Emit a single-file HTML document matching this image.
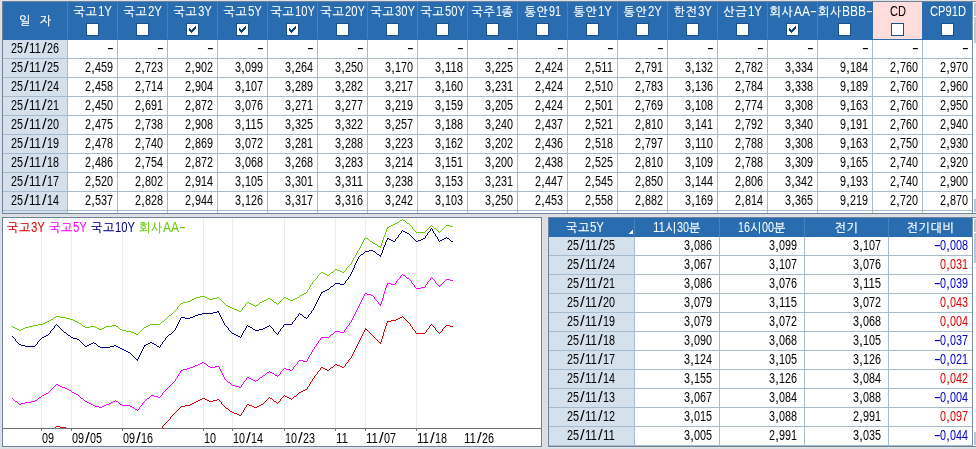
<!DOCTYPE html>
<html lang="ko"><head><meta charset="utf-8"><title>채권 금리</title>
<style>
html,body{margin:0;padding:0}
body{width:976px;height:449px;overflow:hidden;background:#dcdde1;position:relative;font-family:"Liberation Sans","NanumGothic","Noto Sans CJK KR",sans-serif;font-size:14px;line-height:14px;color:#000}
div,span,b,u{position:absolute;white-space:nowrap;height:14px}
.r{background:currentColor}
span{transform-origin:0 50%}
b{font-weight:normal;font-size:12px;-webkit-text-stroke:.2px}
.w{color:#fff}
.cb{width:11px;height:11px;background:#fff;border:1px solid #1b4f87}
.cb svg{position:absolute;left:2px;top:2px}
.s0{transform:scaleX(0.818)}
.s1{transform:scaleX(0.803)}
.s2{transform:scaleX(0.77)}
.s3{transform:scaleX(0.856)}
.s4{transform:scaleX(1.46)}
.s5{transform:scaleX(0.857)}
.s6{transform:scaleX(0.791)}
.s7{transform:scaleX(0.798)}
.s8{transform:scaleX(1.2)}
.s9{transform:scaleX(0.825)}
.s10{transform:scaleX(1.028)}
.s11{transform:scaleX(0.771)}
.s12{transform:scaleX(0.806)}
</style></head><body><div id="wrap" style="left:0;top:0;width:976px;height:449px;will-change:transform">
<div class="r" style="left:1px;top:0px;width:975px;height:215px;color:#e2e2e4"></div><div class="r" style="left:1px;top:216px;width:542px;height:232px;color:#e2e2e4"></div><div class="r" style="left:547px;top:216px;width:429px;height:232px;color:#e2e2e4"></div><div class="r" style="left:2px;top:1px;width:974px;height:213px;color:#6c819b"></div><div class="r" style="left:3px;top:2px;width:969px;height:211px;color:#fff"></div><div class="r" style="left:972px;top:2px;width:1px;height:211px;color:#7d90aa"></div><div class="r" style="left:973px;top:2px;width:3px;height:211px;color:#fff"></div><div class="r" style="left:974px;top:3px;width:2px;height:13px;color:#bcc8d9"></div><div class="r" style="left:974px;top:17px;width:2px;height:26px;color:#bcc8d9"></div><div class="r" style="left:974px;top:199px;width:2px;height:13px;color:#bcc8d9"></div><div class="r" style="left:3px;top:2px;width:969px;height:38px;color:#296cb0"></div><div class="r" style="left:873px;top:2px;width:49px;height:37px;color:#ffdddc"></div><div class="r" style="left:67px;top:2px;width:1px;height:37px;color:#4681bd"></div><div class="r" style="left:117px;top:2px;width:1px;height:37px;color:#4681bd"></div><div class="r" style="left:167px;top:2px;width:1px;height:37px;color:#4681bd"></div><div class="r" style="left:217px;top:2px;width:1px;height:37px;color:#4681bd"></div><div class="r" style="left:267px;top:2px;width:1px;height:37px;color:#4681bd"></div><div class="r" style="left:317px;top:2px;width:1px;height:37px;color:#4681bd"></div><div class="r" style="left:367px;top:2px;width:1px;height:37px;color:#4681bd"></div><div class="r" style="left:417px;top:2px;width:1px;height:37px;color:#4681bd"></div><div class="r" style="left:467px;top:2px;width:1px;height:37px;color:#4681bd"></div><div class="r" style="left:517px;top:2px;width:1px;height:37px;color:#4681bd"></div><div class="r" style="left:567px;top:2px;width:1px;height:37px;color:#4681bd"></div><div class="r" style="left:617px;top:2px;width:1px;height:37px;color:#4681bd"></div><div class="r" style="left:667px;top:2px;width:1px;height:37px;color:#4681bd"></div><div class="r" style="left:717px;top:2px;width:1px;height:37px;color:#4681bd"></div><div class="r" style="left:767px;top:2px;width:1px;height:37px;color:#4681bd"></div><div class="r" style="left:817px;top:2px;width:1px;height:37px;color:#4681bd"></div><div class="r" style="left:3px;top:40px;width:64px;height:173px;color:#d5e0ed"></div><div class="r" style="left:67px;top:40px;width:1px;height:173px;color:#a7bbcf"></div><div class="r" style="left:117px;top:40px;width:1px;height:173px;color:#a7bbcf"></div><div class="r" style="left:167px;top:40px;width:1px;height:173px;color:#a7bbcf"></div><div class="r" style="left:217px;top:40px;width:1px;height:173px;color:#a7bbcf"></div><div class="r" style="left:267px;top:40px;width:1px;height:173px;color:#a7bbcf"></div><div class="r" style="left:317px;top:40px;width:1px;height:173px;color:#a7bbcf"></div><div class="r" style="left:367px;top:40px;width:1px;height:173px;color:#a7bbcf"></div><div class="r" style="left:417px;top:40px;width:1px;height:173px;color:#a7bbcf"></div><div class="r" style="left:467px;top:40px;width:1px;height:173px;color:#a7bbcf"></div><div class="r" style="left:517px;top:40px;width:1px;height:173px;color:#a7bbcf"></div><div class="r" style="left:567px;top:40px;width:1px;height:173px;color:#a7bbcf"></div><div class="r" style="left:617px;top:40px;width:1px;height:173px;color:#a7bbcf"></div><div class="r" style="left:667px;top:40px;width:1px;height:173px;color:#a7bbcf"></div><div class="r" style="left:717px;top:40px;width:1px;height:173px;color:#a7bbcf"></div><div class="r" style="left:767px;top:40px;width:1px;height:173px;color:#a7bbcf"></div><div class="r" style="left:817px;top:40px;width:1px;height:173px;color:#a7bbcf"></div><div class="r" style="left:872px;top:40px;width:1px;height:173px;color:#a7bbcf"></div><div class="r" style="left:922px;top:40px;width:1px;height:173px;color:#a7bbcf"></div><div class="r" style="left:3px;top:58px;width:969px;height:1px;color:#a7bbcf"></div><div class="r" style="left:3px;top:77px;width:969px;height:1px;color:#a7bbcf"></div><div class="r" style="left:3px;top:96px;width:969px;height:1px;color:#a7bbcf"></div><div class="r" style="left:3px;top:115px;width:969px;height:1px;color:#a7bbcf"></div><div class="r" style="left:3px;top:134px;width:969px;height:1px;color:#a7bbcf"></div><div class="r" style="left:3px;top:153px;width:969px;height:1px;color:#a7bbcf"></div><div class="r" style="left:3px;top:172px;width:969px;height:1px;color:#a7bbcf"></div><div class="r" style="left:3px;top:191px;width:969px;height:1px;color:#a7bbcf"></div><div class="r" style="left:3px;top:210px;width:969px;height:1px;color:#a7bbcf"></div>
<b class="w" style="left:19px;top:14px;letter-spacing:0.72px">일</b>
<b class="w" style="left:40px;top:14px;letter-spacing:0.72px">자</b>
<b class="w" style="left:73.5px;top:5px;letter-spacing:0.72px">국고</b><span class="w s0" style="left:97.5px;top:4px">1Y</span>
<div class="cb" style="left:86px;top:23px"></div><b class="w" style="left:123.5px;top:5px;letter-spacing:0.72px">국고</b><span class="w s0" style="left:147.5px;top:4px">2Y</span>
<div class="cb" style="left:136px;top:23px"></div><b class="w" style="left:173.5px;top:5px;letter-spacing:0.72px">국고</b><span class="w s0" style="left:197.5px;top:4px">3Y</span>
<div class="cb" style="left:186px;top:23px"><svg width="7" height="7" viewBox="0 0 7 7"><path d="M0 2h1v1h1v1h1v-1h1v-1h1v-1h1v-1h1v3h-1v1h-1v1h-1v1h-1v1h-1v-1h-1v-1h-1z" fill="#0e3f7a"/></svg></div><b class="w" style="left:223.5px;top:5px;letter-spacing:0.72px">국고</b><span class="w s0" style="left:247.5px;top:4px">5Y</span>
<div class="cb" style="left:236px;top:23px"><svg width="7" height="7" viewBox="0 0 7 7"><path d="M0 2h1v1h1v1h1v-1h1v-1h1v-1h1v-1h1v3h-1v1h-1v1h-1v1h-1v1h-1v-1h-1v-1h-1z" fill="#0e3f7a"/></svg></div><b class="w" style="left:270.5px;top:5px;letter-spacing:0.72px">국고</b><span class="w s1" style="left:294.5px;top:4px">10Y</span>
<div class="cb" style="left:286px;top:23px"><svg width="7" height="7" viewBox="0 0 7 7"><path d="M0 2h1v1h1v1h1v-1h1v-1h1v-1h1v-1h1v3h-1v1h-1v1h-1v1h-1v1h-1v-1h-1v-1h-1z" fill="#0e3f7a"/></svg></div><b class="w" style="left:320.5px;top:5px;letter-spacing:0.72px">국고</b><span class="w s1" style="left:344.5px;top:4px">20Y</span>
<div class="cb" style="left:336px;top:23px"></div><b class="w" style="left:370.5px;top:5px;letter-spacing:0.72px">국고</b><span class="w s1" style="left:394.5px;top:4px">30Y</span>
<div class="cb" style="left:386px;top:23px"></div><b class="w" style="left:420.5px;top:5px;letter-spacing:0.72px">국고</b><span class="w s1" style="left:444.5px;top:4px">50Y</span>
<div class="cb" style="left:436px;top:23px"></div><b class="w" style="left:471.5px;top:5px;letter-spacing:0.72px">국주</b><span class="w s2" style="left:495.5px;top:4px">1</span><b class="w" style="left:501.5px;top:5px;letter-spacing:0.72px">종</b>
<div class="cb" style="left:486px;top:23px"></div><b class="w" style="left:524.5px;top:5px;letter-spacing:0.72px">통안</b><span class="w s2" style="left:548.5px;top:4px">91</span>
<div class="cb" style="left:536px;top:23px"></div><b class="w" style="left:573.5px;top:5px;letter-spacing:0.72px">통안</b><span class="w s0" style="left:597.5px;top:4px">1Y</span>
<div class="cb" style="left:586px;top:23px"></div><b class="w" style="left:623.5px;top:5px;letter-spacing:0.72px">통안</b><span class="w s0" style="left:647.5px;top:4px">2Y</span>
<div class="cb" style="left:636px;top:23px"></div><b class="w" style="left:673.5px;top:5px;letter-spacing:0.72px">한전</b><span class="w s0" style="left:697.5px;top:4px">3Y</span>
<div class="cb" style="left:686px;top:23px"></div><b class="w" style="left:723.5px;top:5px;letter-spacing:0.72px">산금</b><span class="w s0" style="left:747.5px;top:4px">1Y</span>
<div class="cb" style="left:736px;top:23px"></div><b class="w" style="left:769.5px;top:5px;letter-spacing:0.72px">회사</b><span class="w s3" style="left:793.5px;top:4px">AA</span><span class="w s4" style="left:809.6px;top:4px">-</span>
<div class="cb" style="left:786px;top:23px"><svg width="7" height="7" viewBox="0 0 7 7"><path d="M0 2h1v1h1v1h1v-1h1v-1h1v-1h1v-1h1v3h-1v1h-1v1h-1v1h-1v1h-1v-1h-1v-1h-1z" fill="#0e3f7a"/></svg></div><b class="w" style="left:818px;top:5px;letter-spacing:0.72px">회사</b><span class="w s5" style="left:842px;top:4px">BBB</span><span class="w s4" style="left:866.1px;top:4px">-</span>
<div class="cb" style="left:838px;top:23px"></div><span class="s6" style="left:889.5px;top:4px">CD</span>
<div class="cb" style="left:891px;top:23px"></div><span class="w s7" style="left:929.5px;top:4px">CP91D</span>
<div class="cb" style="left:941px;top:23px"></div>
<span class="s2" style="left:11px;top:41px">25</span><span class="s8" style="left:23.67px;top:41px">/</span><span class="s9" style="left:29px;top:41px">11</span><span class="s8" style="left:41.67px;top:41px">/</span><span class="s2" style="left:47px;top:41px">26</span>
<span class="s4" style="left:107.1px;top:41px">-</span>
<span class="s4" style="left:157.1px;top:41px">-</span>
<span class="s4" style="left:207.1px;top:41px">-</span>
<span class="s4" style="left:257.1px;top:41px">-</span>
<span class="s4" style="left:307.1px;top:41px">-</span>
<span class="s4" style="left:357.1px;top:41px">-</span>
<span class="s4" style="left:407.1px;top:41px">-</span>
<span class="s4" style="left:457.1px;top:41px">-</span>
<span class="s4" style="left:507.1px;top:41px">-</span>
<span class="s4" style="left:557.1px;top:41px">-</span>
<span class="s4" style="left:607.1px;top:41px">-</span>
<span class="s4" style="left:657.1px;top:41px">-</span>
<span class="s4" style="left:707.1px;top:41px">-</span>
<span class="s4" style="left:757.1px;top:41px">-</span>
<span class="s4" style="left:807.1px;top:41px">-</span>
<span class="s4" style="left:862.1px;top:41px">-</span>
<span class="s4" style="left:912.1px;top:41px">-</span>
<span class="s4" style="left:962.1px;top:41px">-</span>

<span class="s2" style="left:11px;top:60px">25</span><span class="s8" style="left:23.67px;top:60px">/</span><span class="s9" style="left:29px;top:60px">11</span><span class="s8" style="left:41.67px;top:60px">/</span><span class="s2" style="left:47px;top:60px">25</span>
<span class="s2" style="left:85px;top:60px">2</span><span class="s10" style="left:91px;top:60px">,</span><span class="s11" style="left:95px;top:60px">459</span>
<span class="s2" style="left:135px;top:60px">2</span><span class="s10" style="left:141px;top:60px">,</span><span class="s11" style="left:145px;top:60px">723</span>
<span class="s2" style="left:185px;top:60px">2</span><span class="s10" style="left:191px;top:60px">,</span><span class="s11" style="left:195px;top:60px">902</span>
<span class="s2" style="left:235px;top:60px">3</span><span class="s10" style="left:241px;top:60px">,</span><span class="s11" style="left:245px;top:60px">099</span>
<span class="s2" style="left:285px;top:60px">3</span><span class="s10" style="left:291px;top:60px">,</span><span class="s11" style="left:295px;top:60px">264</span>
<span class="s2" style="left:335px;top:60px">3</span><span class="s10" style="left:341px;top:60px">,</span><span class="s11" style="left:345px;top:60px">250</span>
<span class="s2" style="left:385px;top:60px">3</span><span class="s10" style="left:391px;top:60px">,</span><span class="s11" style="left:395px;top:60px">170</span>
<span class="s2" style="left:435px;top:60px">3</span><span class="s10" style="left:441px;top:60px">,</span><span class="s12" style="left:445px;top:60px">118</span>
<span class="s2" style="left:485px;top:60px">3</span><span class="s10" style="left:491px;top:60px">,</span><span class="s11" style="left:495px;top:60px">225</span>
<span class="s2" style="left:535px;top:60px">2</span><span class="s10" style="left:541px;top:60px">,</span><span class="s11" style="left:545px;top:60px">424</span>
<span class="s2" style="left:585px;top:60px">2</span><span class="s10" style="left:591px;top:60px">,</span><span class="s12" style="left:595px;top:60px">511</span>
<span class="s2" style="left:635px;top:60px">2</span><span class="s10" style="left:641px;top:60px">,</span><span class="s11" style="left:645px;top:60px">791</span>
<span class="s2" style="left:685px;top:60px">3</span><span class="s10" style="left:691px;top:60px">,</span><span class="s11" style="left:695px;top:60px">132</span>
<span class="s2" style="left:735px;top:60px">2</span><span class="s10" style="left:741px;top:60px">,</span><span class="s11" style="left:745px;top:60px">782</span>
<span class="s2" style="left:785px;top:60px">3</span><span class="s10" style="left:791px;top:60px">,</span><span class="s11" style="left:795px;top:60px">334</span>
<span class="s2" style="left:840px;top:60px">9</span><span class="s10" style="left:846px;top:60px">,</span><span class="s11" style="left:850px;top:60px">184</span>
<span class="s2" style="left:890px;top:60px">2</span><span class="s10" style="left:896px;top:60px">,</span><span class="s11" style="left:900px;top:60px">760</span>
<span class="s2" style="left:940px;top:60px">2</span><span class="s10" style="left:946px;top:60px">,</span><span class="s11" style="left:950px;top:60px">970</span>

<span class="s2" style="left:11px;top:79px">25</span><span class="s8" style="left:23.67px;top:79px">/</span><span class="s9" style="left:29px;top:79px">11</span><span class="s8" style="left:41.67px;top:79px">/</span><span class="s2" style="left:47px;top:79px">24</span>
<span class="s2" style="left:85px;top:79px">2</span><span class="s10" style="left:91px;top:79px">,</span><span class="s11" style="left:95px;top:79px">458</span>
<span class="s2" style="left:135px;top:79px">2</span><span class="s10" style="left:141px;top:79px">,</span><span class="s11" style="left:145px;top:79px">714</span>
<span class="s2" style="left:185px;top:79px">2</span><span class="s10" style="left:191px;top:79px">,</span><span class="s11" style="left:195px;top:79px">904</span>
<span class="s2" style="left:235px;top:79px">3</span><span class="s10" style="left:241px;top:79px">,</span><span class="s11" style="left:245px;top:79px">107</span>
<span class="s2" style="left:285px;top:79px">3</span><span class="s10" style="left:291px;top:79px">,</span><span class="s11" style="left:295px;top:79px">289</span>
<span class="s2" style="left:335px;top:79px">3</span><span class="s10" style="left:341px;top:79px">,</span><span class="s11" style="left:345px;top:79px">282</span>
<span class="s2" style="left:385px;top:79px">3</span><span class="s10" style="left:391px;top:79px">,</span><span class="s11" style="left:395px;top:79px">217</span>
<span class="s2" style="left:435px;top:79px">3</span><span class="s10" style="left:441px;top:79px">,</span><span class="s11" style="left:445px;top:79px">160</span>
<span class="s2" style="left:485px;top:79px">3</span><span class="s10" style="left:491px;top:79px">,</span><span class="s11" style="left:495px;top:79px">231</span>
<span class="s2" style="left:535px;top:79px">2</span><span class="s10" style="left:541px;top:79px">,</span><span class="s11" style="left:545px;top:79px">424</span>
<span class="s2" style="left:585px;top:79px">2</span><span class="s10" style="left:591px;top:79px">,</span><span class="s11" style="left:595px;top:79px">510</span>
<span class="s2" style="left:635px;top:79px">2</span><span class="s10" style="left:641px;top:79px">,</span><span class="s11" style="left:645px;top:79px">783</span>
<span class="s2" style="left:685px;top:79px">3</span><span class="s10" style="left:691px;top:79px">,</span><span class="s11" style="left:695px;top:79px">136</span>
<span class="s2" style="left:735px;top:79px">2</span><span class="s10" style="left:741px;top:79px">,</span><span class="s11" style="left:745px;top:79px">784</span>
<span class="s2" style="left:785px;top:79px">3</span><span class="s10" style="left:791px;top:79px">,</span><span class="s11" style="left:795px;top:79px">338</span>
<span class="s2" style="left:840px;top:79px">9</span><span class="s10" style="left:846px;top:79px">,</span><span class="s11" style="left:850px;top:79px">189</span>
<span class="s2" style="left:890px;top:79px">2</span><span class="s10" style="left:896px;top:79px">,</span><span class="s11" style="left:900px;top:79px">760</span>
<span class="s2" style="left:940px;top:79px">2</span><span class="s10" style="left:946px;top:79px">,</span><span class="s11" style="left:950px;top:79px">960</span>

<span class="s2" style="left:11px;top:98px">25</span><span class="s8" style="left:23.67px;top:98px">/</span><span class="s9" style="left:29px;top:98px">11</span><span class="s8" style="left:41.67px;top:98px">/</span><span class="s2" style="left:47px;top:98px">21</span>
<span class="s2" style="left:85px;top:98px">2</span><span class="s10" style="left:91px;top:98px">,</span><span class="s11" style="left:95px;top:98px">450</span>
<span class="s2" style="left:135px;top:98px">2</span><span class="s10" style="left:141px;top:98px">,</span><span class="s11" style="left:145px;top:98px">691</span>
<span class="s2" style="left:185px;top:98px">2</span><span class="s10" style="left:191px;top:98px">,</span><span class="s11" style="left:195px;top:98px">872</span>
<span class="s2" style="left:235px;top:98px">3</span><span class="s10" style="left:241px;top:98px">,</span><span class="s11" style="left:245px;top:98px">076</span>
<span class="s2" style="left:285px;top:98px">3</span><span class="s10" style="left:291px;top:98px">,</span><span class="s11" style="left:295px;top:98px">271</span>
<span class="s2" style="left:335px;top:98px">3</span><span class="s10" style="left:341px;top:98px">,</span><span class="s11" style="left:345px;top:98px">277</span>
<span class="s2" style="left:385px;top:98px">3</span><span class="s10" style="left:391px;top:98px">,</span><span class="s11" style="left:395px;top:98px">219</span>
<span class="s2" style="left:435px;top:98px">3</span><span class="s10" style="left:441px;top:98px">,</span><span class="s11" style="left:445px;top:98px">159</span>
<span class="s2" style="left:485px;top:98px">3</span><span class="s10" style="left:491px;top:98px">,</span><span class="s11" style="left:495px;top:98px">205</span>
<span class="s2" style="left:535px;top:98px">2</span><span class="s10" style="left:541px;top:98px">,</span><span class="s11" style="left:545px;top:98px">424</span>
<span class="s2" style="left:585px;top:98px">2</span><span class="s10" style="left:591px;top:98px">,</span><span class="s11" style="left:595px;top:98px">501</span>
<span class="s2" style="left:635px;top:98px">2</span><span class="s10" style="left:641px;top:98px">,</span><span class="s11" style="left:645px;top:98px">769</span>
<span class="s2" style="left:685px;top:98px">3</span><span class="s10" style="left:691px;top:98px">,</span><span class="s11" style="left:695px;top:98px">108</span>
<span class="s2" style="left:735px;top:98px">2</span><span class="s10" style="left:741px;top:98px">,</span><span class="s11" style="left:745px;top:98px">774</span>
<span class="s2" style="left:785px;top:98px">3</span><span class="s10" style="left:791px;top:98px">,</span><span class="s11" style="left:795px;top:98px">308</span>
<span class="s2" style="left:840px;top:98px">9</span><span class="s10" style="left:846px;top:98px">,</span><span class="s11" style="left:850px;top:98px">163</span>
<span class="s2" style="left:890px;top:98px">2</span><span class="s10" style="left:896px;top:98px">,</span><span class="s11" style="left:900px;top:98px">760</span>
<span class="s2" style="left:940px;top:98px">2</span><span class="s10" style="left:946px;top:98px">,</span><span class="s11" style="left:950px;top:98px">950</span>

<span class="s2" style="left:11px;top:117px">25</span><span class="s8" style="left:23.67px;top:117px">/</span><span class="s9" style="left:29px;top:117px">11</span><span class="s8" style="left:41.67px;top:117px">/</span><span class="s2" style="left:47px;top:117px">20</span>
<span class="s2" style="left:85px;top:117px">2</span><span class="s10" style="left:91px;top:117px">,</span><span class="s11" style="left:95px;top:117px">475</span>
<span class="s2" style="left:135px;top:117px">2</span><span class="s10" style="left:141px;top:117px">,</span><span class="s11" style="left:145px;top:117px">738</span>
<span class="s2" style="left:185px;top:117px">2</span><span class="s10" style="left:191px;top:117px">,</span><span class="s11" style="left:195px;top:117px">908</span>
<span class="s2" style="left:235px;top:117px">3</span><span class="s10" style="left:241px;top:117px">,</span><span class="s12" style="left:245px;top:117px">115</span>
<span class="s2" style="left:285px;top:117px">3</span><span class="s10" style="left:291px;top:117px">,</span><span class="s11" style="left:295px;top:117px">325</span>
<span class="s2" style="left:335px;top:117px">3</span><span class="s10" style="left:341px;top:117px">,</span><span class="s11" style="left:345px;top:117px">322</span>
<span class="s2" style="left:385px;top:117px">3</span><span class="s10" style="left:391px;top:117px">,</span><span class="s11" style="left:395px;top:117px">257</span>
<span class="s2" style="left:435px;top:117px">3</span><span class="s10" style="left:441px;top:117px">,</span><span class="s11" style="left:445px;top:117px">188</span>
<span class="s2" style="left:485px;top:117px">3</span><span class="s10" style="left:491px;top:117px">,</span><span class="s11" style="left:495px;top:117px">240</span>
<span class="s2" style="left:535px;top:117px">2</span><span class="s10" style="left:541px;top:117px">,</span><span class="s11" style="left:545px;top:117px">437</span>
<span class="s2" style="left:585px;top:117px">2</span><span class="s10" style="left:591px;top:117px">,</span><span class="s11" style="left:595px;top:117px">521</span>
<span class="s2" style="left:635px;top:117px">2</span><span class="s10" style="left:641px;top:117px">,</span><span class="s11" style="left:645px;top:117px">810</span>
<span class="s2" style="left:685px;top:117px">3</span><span class="s10" style="left:691px;top:117px">,</span><span class="s11" style="left:695px;top:117px">141</span>
<span class="s2" style="left:735px;top:117px">2</span><span class="s10" style="left:741px;top:117px">,</span><span class="s11" style="left:745px;top:117px">792</span>
<span class="s2" style="left:785px;top:117px">3</span><span class="s10" style="left:791px;top:117px">,</span><span class="s11" style="left:795px;top:117px">340</span>
<span class="s2" style="left:840px;top:117px">9</span><span class="s10" style="left:846px;top:117px">,</span><span class="s11" style="left:850px;top:117px">191</span>
<span class="s2" style="left:890px;top:117px">2</span><span class="s10" style="left:896px;top:117px">,</span><span class="s11" style="left:900px;top:117px">760</span>
<span class="s2" style="left:940px;top:117px">2</span><span class="s10" style="left:946px;top:117px">,</span><span class="s11" style="left:950px;top:117px">940</span>

<span class="s2" style="left:11px;top:136px">25</span><span class="s8" style="left:23.67px;top:136px">/</span><span class="s9" style="left:29px;top:136px">11</span><span class="s8" style="left:41.67px;top:136px">/</span><span class="s2" style="left:47px;top:136px">19</span>
<span class="s2" style="left:85px;top:136px">2</span><span class="s10" style="left:91px;top:136px">,</span><span class="s11" style="left:95px;top:136px">478</span>
<span class="s2" style="left:135px;top:136px">2</span><span class="s10" style="left:141px;top:136px">,</span><span class="s11" style="left:145px;top:136px">740</span>
<span class="s2" style="left:185px;top:136px">2</span><span class="s10" style="left:191px;top:136px">,</span><span class="s11" style="left:195px;top:136px">869</span>
<span class="s2" style="left:235px;top:136px">3</span><span class="s10" style="left:241px;top:136px">,</span><span class="s11" style="left:245px;top:136px">072</span>
<span class="s2" style="left:285px;top:136px">3</span><span class="s10" style="left:291px;top:136px">,</span><span class="s11" style="left:295px;top:136px">281</span>
<span class="s2" style="left:335px;top:136px">3</span><span class="s10" style="left:341px;top:136px">,</span><span class="s11" style="left:345px;top:136px">288</span>
<span class="s2" style="left:385px;top:136px">3</span><span class="s10" style="left:391px;top:136px">,</span><span class="s11" style="left:395px;top:136px">223</span>
<span class="s2" style="left:435px;top:136px">3</span><span class="s10" style="left:441px;top:136px">,</span><span class="s11" style="left:445px;top:136px">162</span>
<span class="s2" style="left:485px;top:136px">3</span><span class="s10" style="left:491px;top:136px">,</span><span class="s11" style="left:495px;top:136px">202</span>
<span class="s2" style="left:535px;top:136px">2</span><span class="s10" style="left:541px;top:136px">,</span><span class="s11" style="left:545px;top:136px">436</span>
<span class="s2" style="left:585px;top:136px">2</span><span class="s10" style="left:591px;top:136px">,</span><span class="s11" style="left:595px;top:136px">518</span>
<span class="s2" style="left:635px;top:136px">2</span><span class="s10" style="left:641px;top:136px">,</span><span class="s11" style="left:645px;top:136px">797</span>
<span class="s2" style="left:685px;top:136px">3</span><span class="s10" style="left:691px;top:136px">,</span><span class="s12" style="left:695px;top:136px">110</span>
<span class="s2" style="left:735px;top:136px">2</span><span class="s10" style="left:741px;top:136px">,</span><span class="s11" style="left:745px;top:136px">788</span>
<span class="s2" style="left:785px;top:136px">3</span><span class="s10" style="left:791px;top:136px">,</span><span class="s11" style="left:795px;top:136px">308</span>
<span class="s2" style="left:840px;top:136px">9</span><span class="s10" style="left:846px;top:136px">,</span><span class="s11" style="left:850px;top:136px">163</span>
<span class="s2" style="left:890px;top:136px">2</span><span class="s10" style="left:896px;top:136px">,</span><span class="s11" style="left:900px;top:136px">750</span>
<span class="s2" style="left:940px;top:136px">2</span><span class="s10" style="left:946px;top:136px">,</span><span class="s11" style="left:950px;top:136px">930</span>

<span class="s2" style="left:11px;top:155px">25</span><span class="s8" style="left:23.67px;top:155px">/</span><span class="s9" style="left:29px;top:155px">11</span><span class="s8" style="left:41.67px;top:155px">/</span><span class="s2" style="left:47px;top:155px">18</span>
<span class="s2" style="left:85px;top:155px">2</span><span class="s10" style="left:91px;top:155px">,</span><span class="s11" style="left:95px;top:155px">486</span>
<span class="s2" style="left:135px;top:155px">2</span><span class="s10" style="left:141px;top:155px">,</span><span class="s11" style="left:145px;top:155px">754</span>
<span class="s2" style="left:185px;top:155px">2</span><span class="s10" style="left:191px;top:155px">,</span><span class="s11" style="left:195px;top:155px">872</span>
<span class="s2" style="left:235px;top:155px">3</span><span class="s10" style="left:241px;top:155px">,</span><span class="s11" style="left:245px;top:155px">068</span>
<span class="s2" style="left:285px;top:155px">3</span><span class="s10" style="left:291px;top:155px">,</span><span class="s11" style="left:295px;top:155px">268</span>
<span class="s2" style="left:335px;top:155px">3</span><span class="s10" style="left:341px;top:155px">,</span><span class="s11" style="left:345px;top:155px">283</span>
<span class="s2" style="left:385px;top:155px">3</span><span class="s10" style="left:391px;top:155px">,</span><span class="s11" style="left:395px;top:155px">214</span>
<span class="s2" style="left:435px;top:155px">3</span><span class="s10" style="left:441px;top:155px">,</span><span class="s11" style="left:445px;top:155px">151</span>
<span class="s2" style="left:485px;top:155px">3</span><span class="s10" style="left:491px;top:155px">,</span><span class="s11" style="left:495px;top:155px">200</span>
<span class="s2" style="left:535px;top:155px">2</span><span class="s10" style="left:541px;top:155px">,</span><span class="s11" style="left:545px;top:155px">438</span>
<span class="s2" style="left:585px;top:155px">2</span><span class="s10" style="left:591px;top:155px">,</span><span class="s11" style="left:595px;top:155px">525</span>
<span class="s2" style="left:635px;top:155px">2</span><span class="s10" style="left:641px;top:155px">,</span><span class="s11" style="left:645px;top:155px">810</span>
<span class="s2" style="left:685px;top:155px">3</span><span class="s10" style="left:691px;top:155px">,</span><span class="s11" style="left:695px;top:155px">109</span>
<span class="s2" style="left:735px;top:155px">2</span><span class="s10" style="left:741px;top:155px">,</span><span class="s11" style="left:745px;top:155px">788</span>
<span class="s2" style="left:785px;top:155px">3</span><span class="s10" style="left:791px;top:155px">,</span><span class="s11" style="left:795px;top:155px">309</span>
<span class="s2" style="left:840px;top:155px">9</span><span class="s10" style="left:846px;top:155px">,</span><span class="s11" style="left:850px;top:155px">165</span>
<span class="s2" style="left:890px;top:155px">2</span><span class="s10" style="left:896px;top:155px">,</span><span class="s11" style="left:900px;top:155px">740</span>
<span class="s2" style="left:940px;top:155px">2</span><span class="s10" style="left:946px;top:155px">,</span><span class="s11" style="left:950px;top:155px">920</span>

<span class="s2" style="left:11px;top:174px">25</span><span class="s8" style="left:23.67px;top:174px">/</span><span class="s9" style="left:29px;top:174px">11</span><span class="s8" style="left:41.67px;top:174px">/</span><span class="s2" style="left:47px;top:174px">17</span>
<span class="s2" style="left:85px;top:174px">2</span><span class="s10" style="left:91px;top:174px">,</span><span class="s11" style="left:95px;top:174px">520</span>
<span class="s2" style="left:135px;top:174px">2</span><span class="s10" style="left:141px;top:174px">,</span><span class="s11" style="left:145px;top:174px">802</span>
<span class="s2" style="left:185px;top:174px">2</span><span class="s10" style="left:191px;top:174px">,</span><span class="s11" style="left:195px;top:174px">914</span>
<span class="s2" style="left:235px;top:174px">3</span><span class="s10" style="left:241px;top:174px">,</span><span class="s11" style="left:245px;top:174px">105</span>
<span class="s2" style="left:285px;top:174px">3</span><span class="s10" style="left:291px;top:174px">,</span><span class="s11" style="left:295px;top:174px">301</span>
<span class="s2" style="left:335px;top:174px">3</span><span class="s10" style="left:341px;top:174px">,</span><span class="s12" style="left:345px;top:174px">311</span>
<span class="s2" style="left:385px;top:174px">3</span><span class="s10" style="left:391px;top:174px">,</span><span class="s11" style="left:395px;top:174px">238</span>
<span class="s2" style="left:435px;top:174px">3</span><span class="s10" style="left:441px;top:174px">,</span><span class="s11" style="left:445px;top:174px">153</span>
<span class="s2" style="left:485px;top:174px">3</span><span class="s10" style="left:491px;top:174px">,</span><span class="s11" style="left:495px;top:174px">231</span>
<span class="s2" style="left:535px;top:174px">2</span><span class="s10" style="left:541px;top:174px">,</span><span class="s11" style="left:545px;top:174px">447</span>
<span class="s2" style="left:585px;top:174px">2</span><span class="s10" style="left:591px;top:174px">,</span><span class="s11" style="left:595px;top:174px">545</span>
<span class="s2" style="left:635px;top:174px">2</span><span class="s10" style="left:641px;top:174px">,</span><span class="s11" style="left:645px;top:174px">850</span>
<span class="s2" style="left:685px;top:174px">3</span><span class="s10" style="left:691px;top:174px">,</span><span class="s11" style="left:695px;top:174px">144</span>
<span class="s2" style="left:735px;top:174px">2</span><span class="s10" style="left:741px;top:174px">,</span><span class="s11" style="left:745px;top:174px">806</span>
<span class="s2" style="left:785px;top:174px">3</span><span class="s10" style="left:791px;top:174px">,</span><span class="s11" style="left:795px;top:174px">342</span>
<span class="s2" style="left:840px;top:174px">9</span><span class="s10" style="left:846px;top:174px">,</span><span class="s11" style="left:850px;top:174px">193</span>
<span class="s2" style="left:890px;top:174px">2</span><span class="s10" style="left:896px;top:174px">,</span><span class="s11" style="left:900px;top:174px">740</span>
<span class="s2" style="left:940px;top:174px">2</span><span class="s10" style="left:946px;top:174px">,</span><span class="s11" style="left:950px;top:174px">900</span>

<span class="s2" style="left:11px;top:193px">25</span><span class="s8" style="left:23.67px;top:193px">/</span><span class="s9" style="left:29px;top:193px">11</span><span class="s8" style="left:41.67px;top:193px">/</span><span class="s2" style="left:47px;top:193px">14</span>
<span class="s2" style="left:85px;top:193px">2</span><span class="s10" style="left:91px;top:193px">,</span><span class="s11" style="left:95px;top:193px">537</span>
<span class="s2" style="left:135px;top:193px">2</span><span class="s10" style="left:141px;top:193px">,</span><span class="s11" style="left:145px;top:193px">828</span>
<span class="s2" style="left:185px;top:193px">2</span><span class="s10" style="left:191px;top:193px">,</span><span class="s11" style="left:195px;top:193px">944</span>
<span class="s2" style="left:235px;top:193px">3</span><span class="s10" style="left:241px;top:193px">,</span><span class="s11" style="left:245px;top:193px">126</span>
<span class="s2" style="left:285px;top:193px">3</span><span class="s10" style="left:291px;top:193px">,</span><span class="s11" style="left:295px;top:193px">317</span>
<span class="s2" style="left:335px;top:193px">3</span><span class="s10" style="left:341px;top:193px">,</span><span class="s11" style="left:345px;top:193px">316</span>
<span class="s2" style="left:385px;top:193px">3</span><span class="s10" style="left:391px;top:193px">,</span><span class="s11" style="left:395px;top:193px">242</span>
<span class="s2" style="left:435px;top:193px">3</span><span class="s10" style="left:441px;top:193px">,</span><span class="s11" style="left:445px;top:193px">103</span>
<span class="s2" style="left:485px;top:193px">3</span><span class="s10" style="left:491px;top:193px">,</span><span class="s11" style="left:495px;top:193px">250</span>
<span class="s2" style="left:535px;top:193px">2</span><span class="s10" style="left:541px;top:193px">,</span><span class="s11" style="left:545px;top:193px">453</span>
<span class="s2" style="left:585px;top:193px">2</span><span class="s10" style="left:591px;top:193px">,</span><span class="s11" style="left:595px;top:193px">558</span>
<span class="s2" style="left:635px;top:193px">2</span><span class="s10" style="left:641px;top:193px">,</span><span class="s11" style="left:645px;top:193px">882</span>
<span class="s2" style="left:685px;top:193px">3</span><span class="s10" style="left:691px;top:193px">,</span><span class="s11" style="left:695px;top:193px">169</span>
<span class="s2" style="left:735px;top:193px">2</span><span class="s10" style="left:741px;top:193px">,</span><span class="s11" style="left:745px;top:193px">814</span>
<span class="s2" style="left:785px;top:193px">3</span><span class="s10" style="left:791px;top:193px">,</span><span class="s11" style="left:795px;top:193px">365</span>
<span class="s2" style="left:840px;top:193px">9</span><span class="s10" style="left:846px;top:193px">,</span><span class="s11" style="left:850px;top:193px">219</span>
<span class="s2" style="left:890px;top:193px">2</span><span class="s10" style="left:896px;top:193px">,</span><span class="s11" style="left:900px;top:193px">720</span>
<span class="s2" style="left:940px;top:193px">2</span><span class="s10" style="left:946px;top:193px">,</span><span class="s11" style="left:950px;top:193px">870</span>

<div class="r" style="left:2px;top:217px;width:540px;height:230px;color:#6c819b"></div><div class="r" style="left:3px;top:218px;width:538px;height:228px;color:#fff"></div><svg style="position:absolute;left:0;top:0" width="976" height="449" viewBox="0 0 976 449"><rect x="41" y="218" width="1" height="210" fill="#ececec"/><rect x="41" y="429" width="1" height="2" fill="#707070"/><rect x="71" y="218" width="1" height="210" fill="#ececec"/><rect x="71" y="429" width="1" height="2" fill="#707070"/><rect x="122" y="218" width="1" height="210" fill="#ececec"/><rect x="122" y="429" width="1" height="2" fill="#707070"/><rect x="203" y="218" width="1" height="210" fill="#ececec"/><rect x="203" y="429" width="1" height="2" fill="#707070"/><rect x="232" y="218" width="1" height="210" fill="#ececec"/><rect x="232" y="429" width="1" height="2" fill="#707070"/><rect x="284" y="218" width="1" height="210" fill="#ececec"/><rect x="284" y="429" width="1" height="2" fill="#707070"/><rect x="335" y="218" width="1" height="210" fill="#ececec"/><rect x="335" y="429" width="1" height="2" fill="#707070"/><rect x="365" y="218" width="1" height="210" fill="#ececec"/><rect x="365" y="429" width="1" height="2" fill="#707070"/><rect x="416" y="218" width="1" height="210" fill="#ececec"/><rect x="416" y="429" width="1" height="2" fill="#707070"/><rect x="3" y="428" width="538" height="1" fill="#707070"/><clipPath id="cp"><rect x="3" y="218" width="538" height="210"/></clipPath><g clip-path="url(#cp)" shape-rendering="crispEdges"><path fill="#dc0000" d="M56 426h4v1h-4zM60 427h6v1h-6zM181 406h4v1h-4zM185 405h5v1h-5zM190 404h2v1h-2zM192 403h2v1h-2zM194 402h2v1h-2zM196 401h2v1h-2zM198 400h2v1h-2zM200 399h2v1h-2zM202 398h3v1h-3zM205 399h2v1h-2zM207 400h2v1h-2zM209 401h4v1h-4zM213 400h4v1h-4zM217 399h2v1h-2zM226 408h2v1h-2zM230 411h2v1h-2zM232 412h2v1h-2zM234 413h3v1h-3zM237 414h2v1h-2zM239 415h2v1h-2zM247 404h2v1h-2zM249 405h3v1h-3zM252 406h2v1h-2zM254 407h3v1h-3zM257 406h2v1h-2zM259 405h2v1h-2zM261 404h2v1h-2zM270 398h2v1h-2zM274 401h2v1h-2zM285 396h2v1h-2zM287 397h2v1h-2zM289 398h2v1h-2zM294 396h2v1h-2zM299 392h2v1h-2zM301 391h2v1h-2zM303 390h2v1h-2zM305 389h2v1h-2zM321 367h2v1h-2zM323 368h2v1h-2zM325 369h2v1h-2zM327 370h2v1h-2zM331 367h2v1h-2zM335 364h2v1h-2zM337 365h3v1h-3zM340 366h2v1h-2zM342 367h2v1h-2zM365 329h2v1h-2zM379 342h2v1h-2zM387 321h4v1h-4zM391 320h5v1h-5zM396 319h2v1h-2zM398 318h2v1h-2zM400 317h2v1h-2zM416 333h9v1h-9zM446 325h4v1h-4zM450 326h3v1h-3zM55 427h1v1h-1zM162 426h1v2h-1zM163 425h1v1h-1zM164 424h1v1h-1zM165 423h1v1h-1zM166 422h1v1h-1zM167 421h1v1h-1zM168 420h1v1h-1zM169 419h1v1h-1zM170 417h1v2h-1zM171 416h1v1h-1zM172 415h1v1h-1zM173 414h1v1h-1zM174 413h1v1h-1zM175 412h1v1h-1zM176 411h1v1h-1zM177 410h1v1h-1zM178 409h1v1h-1zM179 408h1v1h-1zM180 407h1v1h-1zM219 400h1v1h-1zM220 401h1v1h-1zM221 402h1v2h-1zM222 404h1v1h-1zM223 405h1v1h-1zM224 406h1v1h-1zM225 407h1v1h-1zM228 409h1v1h-1zM229 410h1v1h-1zM241 413h1v2h-1zM242 412h1v1h-1zM243 410h1v2h-1zM244 408h1v2h-1zM245 407h1v1h-1zM246 405h1v2h-1zM263 403h1v1h-1zM264 402h1v1h-1zM265 401h1v1h-1zM266 400h1v1h-1zM267 399h1v1h-1zM268 398h1v1h-1zM269 397h1v1h-1zM272 399h1v1h-1zM273 400h1v1h-1zM276 402h1v1h-1zM277 403h1v1h-1zM278 402h1v1h-1zM279 401h1v1h-1zM280 399h1v2h-1zM281 398h1v1h-1zM282 397h1v1h-1zM283 396h1v1h-1zM284 395h1v1h-1zM291 399h1v1h-1zM292 398h1v1h-1zM293 397h1v1h-1zM296 395h1v1h-1zM297 394h1v1h-1zM298 393h1v1h-1zM307 387h1v2h-1zM308 386h1v1h-1zM309 384h1v2h-1zM310 382h1v2h-1zM311 381h1v1h-1zM312 379h1v2h-1zM313 378h1v1h-1zM314 376h1v2h-1zM315 375h1v1h-1zM316 374h1v1h-1zM317 372h1v2h-1zM318 371h1v1h-1zM319 370h1v1h-1zM320 368h1v2h-1zM329 369h1v1h-1zM330 368h1v1h-1zM333 366h1v1h-1zM334 365h1v1h-1zM344 366h1v1h-1zM345 364h1v2h-1zM346 363h1v1h-1zM347 362h1v1h-1zM348 360h1v2h-1zM349 359h1v1h-1zM350 358h1v1h-1zM351 356h1v2h-1zM352 354h1v2h-1zM353 352h1v2h-1zM354 350h1v2h-1zM355 348h1v2h-1zM356 346h1v2h-1zM357 344h1v2h-1zM358 342h1v2h-1zM359 340h1v2h-1zM360 338h1v2h-1zM361 336h1v2h-1zM362 334h1v2h-1zM363 332h1v2h-1zM364 330h1v2h-1zM365 328h1v1h-1zM367 330h1v1h-1zM368 331h1v1h-1zM369 332h1v1h-1zM370 333h1v1h-1zM371 334h1v1h-1zM372 335h1v1h-1zM373 336h1v1h-1zM374 337h1v1h-1zM375 338h1v1h-1zM376 339h1v1h-1zM377 340h1v1h-1zM378 341h1v1h-1zM380 343h1v1h-1zM381 339h1v3h-1zM382 336h1v3h-1zM383 332h1v4h-1zM384 329h1v3h-1zM385 326h1v3h-1zM386 323h1v3h-1zM387 322h1v1h-1zM402 316h1v1h-1zM403 317h1v1h-1zM404 318h1v1h-1zM405 319h1v1h-1zM406 320h1v1h-1zM407 321h1v1h-1zM408 322h1v1h-1zM409 323h1v1h-1zM410 324h1v2h-1zM411 326h1v1h-1zM412 327h1v2h-1zM413 329h1v1h-1zM414 330h1v1h-1zM415 331h1v2h-1zM425 332h1v1h-1zM426 330h1v2h-1zM427 329h1v1h-1zM428 328h1v1h-1zM429 326h1v2h-1zM430 325h1v1h-1zM431 324h1v1h-1zM432 325h1v1h-1zM433 326h1v1h-1zM434 327h1v1h-1zM435 328h1v2h-1zM436 330h1v1h-1zM437 331h1v1h-1zM438 332h1v1h-1zM439 333h1v1h-1zM440 332h1v1h-1zM441 331h1v1h-1zM442 329h1v2h-1zM443 328h1v1h-1zM444 327h1v1h-1zM445 326h1v1h-1z"/><path fill="#ff00ff" d="M15 401h2v1h-2zM19 404h2v1h-2zM21 403h4v1h-4zM25 402h6v1h-6zM31 401h4v1h-4zM35 400h2v1h-2zM39 397h2v1h-2zM42 395h2v1h-2zM44 394h2v1h-2zM46 393h2v1h-2zM56 384h2v1h-2zM58 385h2v1h-2zM60 386h2v1h-2zM62 387h3v1h-3zM65 388h2v1h-2zM67 389h2v1h-2zM69 390h2v1h-2zM72 392h2v1h-2zM74 393h2v1h-2zM76 394h2v1h-2zM81 398h2v1h-2zM85 401h2v1h-2zM87 402h2v1h-2zM89 403h2v1h-2zM91 404h2v1h-2zM93 405h2v1h-2zM95 406h4v1h-4zM99 407h3v1h-3zM102 406h2v1h-2zM104 405h2v1h-2zM106 404h3v1h-3zM109 403h2v1h-2zM111 402h2v1h-2zM113 401h2v1h-2zM116 401h2v1h-2zM120 404h2v1h-2zM122 405h8v1h-8zM130 406h2v1h-2zM132 407h2v1h-2zM135 409h2v1h-2zM147 398h2v1h-2zM151 395h3v1h-3zM154 396h4v1h-4zM158 397h2v1h-2zM181 370h2v1h-2zM183 369h4v1h-4zM187 368h3v1h-3zM190 367h3v1h-3zM193 366h2v1h-2zM195 365h3v1h-3zM198 364h2v1h-2zM200 363h2v1h-2zM202 362h2v1h-2zM204 363h2v1h-2zM208 366h2v1h-2zM210 367h5v1h-5zM215 366h4v1h-4zM228 382h2v1h-2zM232 385h3v1h-3zM235 386h4v1h-4zM239 387h2v1h-2zM247 377h2v1h-2zM249 378h2v1h-2zM251 379h2v1h-2zM253 380h2v1h-2zM256 380h2v1h-2zM260 377h2v1h-2zM263 375h2v1h-2zM267 372h2v1h-2zM270 372h2v1h-2zM272 373h2v1h-2zM275 375h2v1h-2zM284 368h2v1h-2zM286 369h4v1h-4zM290 370h2v1h-2zM299 360h4v1h-4zM303 361h4v1h-4zM321 337h8v1h-8zM331 334h2v1h-2zM335 331h5v1h-5zM340 332h4v1h-4zM365 293h2v1h-2zM367 294h4v1h-4zM371 295h2v1h-2zM379 304h2v1h-2zM387 283h4v1h-4zM391 284h4v1h-4zM403 275h2v1h-2zM407 278h2v1h-2zM416 288h5v1h-5zM421 287h4v1h-4zM446 279h4v1h-4zM450 280h3v1h-3zM12 398h1v1h-1zM13 399h1v1h-1zM14 400h1v1h-1zM17 402h1v1h-1zM18 403h1v1h-1zM37 399h1v1h-1zM38 398h1v1h-1zM41 396h1v1h-1zM48 392h1v1h-1zM49 391h1v1h-1zM50 390h1v1h-1zM51 389h1v1h-1zM52 388h1v1h-1zM53 387h1v1h-1zM54 386h1v1h-1zM55 385h1v1h-1zM71 391h1v1h-1zM78 395h1v1h-1zM79 396h1v1h-1zM80 397h1v1h-1zM83 399h1v1h-1zM84 400h1v1h-1zM115 400h1v1h-1zM118 402h1v1h-1zM119 403h1v1h-1zM134 408h1v1h-1zM137 410h1v1h-1zM138 409h1v1h-1zM139 407h1v2h-1zM140 406h1v1h-1zM141 405h1v1h-1zM142 403h1v2h-1zM143 402h1v1h-1zM144 401h1v1h-1zM145 400h1v1h-1zM146 399h1v1h-1zM149 397h1v1h-1zM150 396h1v1h-1zM160 396h1v1h-1zM161 395h1v1h-1zM162 393h1v2h-1zM163 392h1v1h-1zM164 391h1v1h-1zM165 390h1v1h-1zM166 389h1v1h-1zM167 388h1v1h-1zM168 387h1v1h-1zM169 386h1v1h-1zM170 385h1v1h-1zM171 384h1v1h-1zM172 383h1v1h-1zM173 382h1v1h-1zM174 381h1v1h-1zM175 379h1v2h-1zM176 378h1v1h-1zM177 376h1v2h-1zM178 374h1v2h-1zM179 373h1v1h-1zM180 371h1v2h-1zM206 364h1v1h-1zM207 365h1v1h-1zM219 367h1v2h-1zM220 369h1v2h-1zM221 371h1v2h-1zM222 373h1v2h-1zM223 375h1v2h-1zM224 377h1v2h-1zM225 379h1v1h-1zM226 380h1v1h-1zM227 381h1v1h-1zM230 383h1v1h-1zM231 384h1v1h-1zM241 385h1v2h-1zM242 384h1v1h-1zM243 382h1v2h-1zM244 381h1v1h-1zM245 380h1v1h-1zM246 378h1v2h-1zM255 381h1v1h-1zM258 379h1v1h-1zM259 378h1v1h-1zM262 376h1v1h-1zM265 374h1v1h-1zM266 373h1v1h-1zM269 371h1v1h-1zM274 374h1v1h-1zM277 376h1v1h-1zM278 375h1v1h-1zM279 374h1v1h-1zM280 372h1v2h-1zM281 371h1v1h-1zM282 370h1v1h-1zM283 369h1v1h-1zM292 369h1v1h-1zM293 367h1v2h-1zM294 366h1v1h-1zM295 365h1v1h-1zM296 364h1v1h-1zM297 362h1v2h-1zM298 361h1v1h-1zM307 359h1v2h-1zM308 357h1v2h-1zM309 355h1v2h-1zM310 354h1v1h-1zM311 352h1v2h-1zM312 350h1v2h-1zM313 349h1v1h-1zM314 347h1v2h-1zM315 346h1v1h-1zM316 344h1v2h-1zM317 343h1v1h-1zM318 341h1v2h-1zM319 340h1v1h-1zM320 338h1v2h-1zM329 336h1v1h-1zM330 335h1v1h-1zM333 333h1v1h-1zM334 332h1v1h-1zM344 330h1v2h-1zM345 329h1v1h-1zM346 327h1v2h-1zM347 326h1v1h-1zM348 325h1v1h-1zM349 323h1v2h-1zM350 322h1v1h-1zM351 320h1v2h-1zM352 318h1v2h-1zM353 316h1v2h-1zM354 314h1v2h-1zM355 312h1v2h-1zM356 310h1v2h-1zM357 308h1v2h-1zM358 306h1v2h-1zM359 304h1v2h-1zM360 302h1v2h-1zM361 300h1v2h-1zM362 298h1v2h-1zM363 296h1v2h-1zM364 294h1v2h-1zM373 296h1v1h-1zM374 297h1v2h-1zM375 299h1v1h-1zM376 300h1v1h-1zM377 301h1v1h-1zM378 302h1v2h-1zM380 305h1v1h-1zM381 301h1v3h-1zM382 298h1v3h-1zM383 294h1v4h-1zM384 291h1v3h-1zM385 288h1v3h-1zM386 285h1v3h-1zM387 284h1v1h-1zM395 283h1v1h-1zM396 281h1v2h-1zM397 280h1v1h-1zM398 279h1v1h-1zM399 278h1v1h-1zM400 276h1v2h-1zM401 275h1v1h-1zM402 274h1v1h-1zM405 276h1v1h-1zM406 277h1v1h-1zM409 279h1v1h-1zM410 280h1v1h-1zM411 281h1v2h-1zM412 283h1v1h-1zM413 284h1v1h-1zM414 285h1v2h-1zM415 287h1v1h-1zM425 285h1v2h-1zM426 284h1v1h-1zM427 282h1v2h-1zM428 281h1v1h-1zM429 280h1v1h-1zM430 278h1v2h-1zM431 277h1v1h-1zM432 278h1v1h-1zM433 279h1v1h-1zM434 280h1v1h-1zM435 281h1v2h-1zM436 283h1v1h-1zM437 284h1v1h-1zM438 285h1v1h-1zM439 286h1v1h-1zM440 285h1v1h-1zM441 284h1v1h-1zM442 283h1v1h-1zM443 282h1v1h-1zM444 281h1v1h-1zM445 280h1v1h-1z"/><path fill="#000080" d="M19 344h2v1h-2zM21 345h4v1h-4zM25 346h10v1h-10zM42 337h2v1h-2zM44 336h2v1h-2zM46 335h2v1h-2zM64 332h2v1h-2zM68 335h2v1h-2zM71 337h2v1h-2zM73 338h4v1h-4zM77 339h2v1h-2zM85 346h2v1h-2zM87 345h2v1h-2zM89 344h2v1h-2zM91 343h2v1h-2zM94 343h2v1h-2zM98 346h2v1h-2zM100 347h10v1h-10zM110 346h4v1h-4zM114 345h2v1h-2zM116 346h2v1h-2zM118 347h2v1h-2zM120 348h2v1h-2zM122 349h2v1h-2zM124 350h2v1h-2zM126 351h2v1h-2zM128 352h2v1h-2zM136 359h2v1h-2zM144 345h2v1h-2zM146 344h2v1h-2zM148 343h2v1h-2zM150 342h2v1h-2zM152 343h2v1h-2zM154 344h2v1h-2zM157 346h2v1h-2zM169 334h2v1h-2zM181 317h4v1h-4zM185 318h5v1h-5zM190 317h3v1h-3zM193 316h2v1h-2zM195 315h3v1h-3zM198 314h4v1h-4zM202 313h11v1h-11zM213 312h4v1h-4zM217 311h2v1h-2zM232 333h2v1h-2zM234 334h2v1h-2zM236 335h2v1h-2zM238 336h2v1h-2zM248 326h2v1h-2zM250 327h2v1h-2zM253 329h2v1h-2zM255 330h4v1h-4zM259 329h4v1h-4zM263 328h2v1h-2zM265 327h2v1h-2zM267 326h2v1h-2zM284 324h8v1h-8zM300 314h2v1h-2zM304 317h2v1h-2zM321 292h2v1h-2zM323 291h2v1h-2zM325 290h2v1h-2zM327 289h2v1h-2zM331 286h2v1h-2zM335 283h5v1h-5zM340 284h4v1h-4zM361 254h2v1h-2zM365 251h4v1h-4zM369 250h4v1h-4zM373 251h2v1h-2zM377 254h2v1h-2zM379 255h2v1h-2zM387 238h2v1h-2zM389 239h2v1h-2zM391 240h2v1h-2zM393 241h2v1h-2zM403 231h2v1h-2zM405 232h2v1h-2zM407 233h2v1h-2zM416 241h2v1h-2zM418 240h3v1h-3zM421 239h2v1h-2zM423 238h2v1h-2zM440 240h2v1h-2zM442 239h2v1h-2zM444 238h2v1h-2zM447 238h2v1h-2zM451 241h2v1h-2zM12 336h1v1h-1zM13 337h1v1h-1zM14 338h1v1h-1zM15 339h1v2h-1zM16 341h1v1h-1zM17 342h1v1h-1zM18 343h1v1h-1zM35 345h1v1h-1zM36 344h1v1h-1zM37 342h1v2h-1zM38 341h1v1h-1zM39 340h1v1h-1zM40 339h1v1h-1zM41 338h1v1h-1zM48 334h1v1h-1zM49 333h1v1h-1zM50 331h1v2h-1zM51 330h1v1h-1zM52 329h1v1h-1zM53 328h1v1h-1zM54 326h1v2h-1zM55 325h1v1h-1zM56 324h1v1h-1zM57 325h1v1h-1zM58 326h1v1h-1zM59 327h1v1h-1zM60 328h1v1h-1zM61 329h1v1h-1zM62 330h1v1h-1zM63 331h1v1h-1zM66 333h1v1h-1zM67 334h1v1h-1zM70 336h1v1h-1zM79 340h1v1h-1zM80 341h1v1h-1zM81 342h1v1h-1zM82 343h1v1h-1zM83 344h1v1h-1zM84 345h1v1h-1zM93 342h1v1h-1zM96 344h1v1h-1zM97 345h1v1h-1zM130 353h1v1h-1zM131 354h1v1h-1zM132 355h1v1h-1zM133 356h1v1h-1zM134 357h1v1h-1zM135 358h1v1h-1zM137 360h1v1h-1zM138 357h1v2h-1zM139 355h1v2h-1zM140 353h1v2h-1zM141 351h1v2h-1zM142 349h1v2h-1zM143 347h1v2h-1zM144 346h1v1h-1zM156 345h1v1h-1zM159 347h1v1h-1zM160 345h1v2h-1zM161 344h1v1h-1zM162 342h1v2h-1zM163 341h1v1h-1zM164 340h1v1h-1zM165 338h1v2h-1zM166 337h1v1h-1zM167 336h1v1h-1zM168 335h1v1h-1zM171 333h1v1h-1zM172 332h1v1h-1zM173 331h1v1h-1zM174 330h1v1h-1zM175 328h1v2h-1zM176 326h1v2h-1zM177 324h1v2h-1zM178 322h1v2h-1zM179 320h1v2h-1zM180 318h1v2h-1zM218 312h1v1h-1zM219 313h1v2h-1zM220 315h1v2h-1zM221 317h1v2h-1zM222 319h1v2h-1zM223 321h1v2h-1zM224 323h1v2h-1zM225 325h1v1h-1zM226 326h1v1h-1zM227 327h1v1h-1zM228 328h1v2h-1zM229 330h1v1h-1zM230 331h1v1h-1zM231 332h1v1h-1zM240 337h1v1h-1zM241 335h1v2h-1zM242 333h1v2h-1zM243 331h1v2h-1zM244 330h1v1h-1zM245 328h1v2h-1zM246 326h1v2h-1zM247 325h1v1h-1zM252 328h1v1h-1zM269 325h1v1h-1zM270 326h1v1h-1zM271 327h1v1h-1zM272 328h1v1h-1zM273 329h1v2h-1zM274 331h1v1h-1zM275 332h1v1h-1zM276 333h1v1h-1zM277 334h1v1h-1zM278 332h1v2h-1zM279 331h1v1h-1zM280 329h1v2h-1zM281 328h1v1h-1zM282 327h1v1h-1zM283 325h1v2h-1zM292 322h1v2h-1zM293 321h1v1h-1zM294 320h1v1h-1zM295 318h1v2h-1zM296 317h1v1h-1zM297 316h1v1h-1zM298 314h1v2h-1zM299 313h1v1h-1zM302 315h1v1h-1zM303 316h1v1h-1zM306 318h1v1h-1zM307 317h1v1h-1zM308 315h1v2h-1zM309 314h1v1h-1zM310 313h1v1h-1zM311 311h1v2h-1zM312 310h1v1h-1zM313 308h1v2h-1zM314 306h1v2h-1zM315 304h1v2h-1zM316 302h1v2h-1zM317 300h1v2h-1zM318 298h1v2h-1zM319 296h1v2h-1zM320 294h1v2h-1zM321 293h1v1h-1zM329 288h1v1h-1zM330 287h1v1h-1zM333 285h1v1h-1zM334 284h1v1h-1zM344 283h1v1h-1zM345 281h1v2h-1zM346 280h1v1h-1zM347 279h1v1h-1zM348 277h1v2h-1zM349 276h1v1h-1zM350 274h1v2h-1zM351 272h1v2h-1zM352 270h1v2h-1zM353 268h1v2h-1zM354 265h1v3h-1zM355 263h1v2h-1zM356 261h1v2h-1zM357 259h1v2h-1zM358 257h1v2h-1zM359 256h1v1h-1zM360 255h1v1h-1zM363 253h1v1h-1zM364 252h1v1h-1zM375 252h1v1h-1zM376 253h1v1h-1zM380 256h1v1h-1zM381 253h1v2h-1zM382 250h1v3h-1zM383 247h1v3h-1zM384 245h1v2h-1zM385 242h1v3h-1zM386 240h1v2h-1zM387 239h1v1h-1zM395 239h1v2h-1zM396 238h1v1h-1zM397 237h1v1h-1zM398 235h1v2h-1zM399 234h1v1h-1zM400 233h1v1h-1zM401 231h1v2h-1zM402 230h1v1h-1zM409 234h1v1h-1zM410 235h1v1h-1zM411 236h1v1h-1zM412 237h1v1h-1zM413 238h1v1h-1zM414 239h1v1h-1zM415 240h1v1h-1zM425 236h1v2h-1zM426 235h1v1h-1zM427 233h1v2h-1zM428 232h1v1h-1zM429 231h1v1h-1zM430 229h1v2h-1zM431 228h1v1h-1zM432 229h1v2h-1zM433 231h1v2h-1zM434 233h1v1h-1zM435 234h1v2h-1zM436 236h1v1h-1zM437 237h1v2h-1zM438 239h1v2h-1zM439 241h1v1h-1zM446 237h1v1h-1zM449 239h1v1h-1zM450 240h1v1h-1z"/><path fill="#66cc00" d="M13 327h2v1h-2zM15 328h2v1h-2zM17 329h2v1h-2zM19 330h2v1h-2zM21 329h2v1h-2zM23 328h2v1h-2zM25 327h4v1h-4zM29 326h4v1h-4zM33 325h5v1h-5zM38 324h5v1h-5zM43 323h2v1h-2zM45 322h2v1h-2zM47 321h2v1h-2zM49 320h2v1h-2zM51 319h2v1h-2zM54 317h2v1h-2zM56 316h4v1h-4zM60 317h6v1h-6zM66 318h4v1h-4zM70 319h3v1h-3zM73 320h2v1h-2zM75 321h2v1h-2zM77 322h2v1h-2zM79 323h2v1h-2zM83 326h2v1h-2zM85 327h5v1h-5zM90 326h5v1h-5zM95 327h2v1h-2zM97 328h2v1h-2zM99 329h3v1h-3zM102 328h2v1h-2zM104 327h2v1h-2zM106 326h6v1h-6zM112 325h4v1h-4zM116 326h2v1h-2zM120 329h2v1h-2zM122 330h4v1h-4zM126 331h5v1h-5zM131 332h3v1h-3zM134 333h2v1h-2zM136 334h2v1h-2zM144 327h2v1h-2zM146 326h2v1h-2zM148 325h2v1h-2zM150 324h10v1h-10zM162 321h2v1h-2zM169 315h2v1h-2zM181 303h2v1h-2zM183 302h4v1h-4zM187 301h3v1h-3zM190 300h2v1h-2zM192 299h2v1h-2zM194 298h2v1h-2zM196 297h4v1h-4zM200 296h5v1h-5zM205 297h2v1h-2zM207 298h2v1h-2zM209 299h4v1h-4zM213 298h4v1h-4zM217 297h2v1h-2zM226 305h2v1h-2zM228 306h2v1h-2zM230 307h2v1h-2zM232 308h2v1h-2zM234 309h3v1h-3zM237 310h2v1h-2zM239 311h2v1h-2zM247 302h2v1h-2zM249 303h2v1h-2zM251 304h2v1h-2zM253 305h2v1h-2zM256 305h2v1h-2zM260 302h2v1h-2zM262 301h2v1h-2zM264 300h2v1h-2zM266 299h2v1h-2zM268 298h2v1h-2zM270 299h2v1h-2zM274 302h2v1h-2zM284 297h2v1h-2zM286 298h2v1h-2zM288 299h2v1h-2zM290 300h3v1h-3zM293 299h2v1h-2zM295 298h2v1h-2zM297 297h2v1h-2zM300 295h2v1h-2zM302 294h2v1h-2zM304 293h2v1h-2zM321 272h2v1h-2zM323 273h2v1h-2zM325 274h2v1h-2zM327 275h2v1h-2zM331 272h2v1h-2zM335 269h2v1h-2zM337 270h3v1h-3zM340 271h2v1h-2zM342 272h2v1h-2zM366 238h2v1h-2zM370 241h2v1h-2zM373 243h2v1h-2zM375 244h2v1h-2zM378 246h3v1h-3zM387 227h2v1h-2zM389 226h2v1h-2zM391 225h2v1h-2zM393 224h2v1h-2zM395 223h2v1h-2zM397 222h2v1h-2zM400 220h2v1h-2zM403 220h2v1h-2zM407 223h2v1h-2zM416 232h9v1h-9zM434 228h2v1h-2zM446 225h4v1h-4zM450 226h3v1h-3zM12 326h1v1h-1zM53 318h1v1h-1zM81 324h1v1h-1zM82 325h1v1h-1zM118 327h1v1h-1zM119 328h1v1h-1zM138 333h1v1h-1zM139 332h1v1h-1zM140 331h1v1h-1zM141 330h1v1h-1zM142 329h1v1h-1zM143 328h1v1h-1zM160 323h1v1h-1zM161 322h1v1h-1zM164 320h1v1h-1zM165 319h1v1h-1zM166 318h1v1h-1zM167 317h1v1h-1zM168 316h1v1h-1zM171 314h1v1h-1zM172 313h1v1h-1zM173 312h1v1h-1zM174 311h1v1h-1zM175 310h1v1h-1zM176 309h1v1h-1zM177 307h1v2h-1zM178 306h1v1h-1zM179 305h1v1h-1zM180 304h1v1h-1zM219 298h1v1h-1zM220 299h1v1h-1zM221 300h1v1h-1zM222 301h1v1h-1zM223 302h1v1h-1zM224 303h1v1h-1zM225 304h1v1h-1zM241 310h1v1h-1zM242 308h1v2h-1zM243 307h1v1h-1zM244 306h1v1h-1zM245 304h1v2h-1zM246 303h1v1h-1zM255 306h1v1h-1zM258 304h1v1h-1zM259 303h1v1h-1zM272 300h1v1h-1zM273 301h1v1h-1zM276 303h1v1h-1zM277 304h1v1h-1zM278 303h1v1h-1zM279 302h1v1h-1zM280 301h1v1h-1zM281 300h1v1h-1zM282 299h1v1h-1zM283 298h1v1h-1zM299 296h1v1h-1zM306 292h1v1h-1zM307 290h1v2h-1zM308 289h1v1h-1zM309 287h1v2h-1zM310 285h1v2h-1zM311 284h1v1h-1zM312 282h1v2h-1zM313 281h1v1h-1zM314 280h1v1h-1zM315 279h1v1h-1zM316 278h1v1h-1zM317 276h1v2h-1zM318 275h1v1h-1zM319 274h1v1h-1zM320 273h1v1h-1zM329 274h1v1h-1zM330 273h1v1h-1zM333 271h1v1h-1zM334 270h1v1h-1zM344 271h1v1h-1zM345 270h1v1h-1zM346 268h1v2h-1zM347 267h1v1h-1zM348 266h1v1h-1zM349 265h1v1h-1zM350 264h1v1h-1zM351 262h1v2h-1zM352 260h1v2h-1zM353 258h1v2h-1zM354 257h1v1h-1zM355 255h1v2h-1zM356 253h1v2h-1zM357 251h1v2h-1zM358 250h1v1h-1zM359 248h1v2h-1zM360 246h1v2h-1zM361 244h1v2h-1zM362 242h1v2h-1zM363 240h1v2h-1zM364 238h1v2h-1zM365 237h1v1h-1zM368 239h1v1h-1zM369 240h1v1h-1zM372 242h1v1h-1zM377 245h1v1h-1zM380 247h1v1h-1zM381 243h1v3h-1zM382 240h1v3h-1zM383 237h1v3h-1zM384 235h1v2h-1zM385 232h1v3h-1zM386 229h1v3h-1zM387 228h1v1h-1zM399 221h1v1h-1zM402 219h1v1h-1zM405 221h1v1h-1zM406 222h1v1h-1zM409 224h1v1h-1zM410 225h1v1h-1zM411 226h1v1h-1zM412 227h1v2h-1zM413 229h1v1h-1zM414 230h1v1h-1zM415 231h1v1h-1zM425 231h1v1h-1zM426 230h1v1h-1zM427 229h1v1h-1zM428 228h1v1h-1zM429 227h1v1h-1zM430 226h1v1h-1zM431 225h1v1h-1zM432 226h1v1h-1zM433 227h1v1h-1zM436 229h1v1h-1zM437 230h1v1h-1zM438 231h1v1h-1zM439 232h1v1h-1zM440 231h1v1h-1zM441 230h1v1h-1zM442 229h1v1h-1zM443 228h1v1h-1zM444 227h1v1h-1zM445 226h1v1h-1z"/></g></svg>
<b style="left:7px;top:221px;color:#dc0000;letter-spacing:0.72px">국고</b><span class="s0" style="left:31px;top:220px;color:#dc0000">3Y</span>
<b style="left:49px;top:221px;color:#ff00ff;letter-spacing:0.72px">국고</b><span class="s0" style="left:73px;top:220px;color:#ff00ff">5Y</span>
<b style="left:91px;top:221px;color:#000080;letter-spacing:0.72px">국고</b><span class="s1" style="left:115px;top:220px;color:#000080">10Y</span>
<b style="left:139px;top:221px;color:#66cc00;letter-spacing:0.72px">회사</b><span class="s3" style="left:163px;top:220px;color:#66cc00">AA</span><span class="s4" style="left:179.1px;top:220px;color:#66cc00">-</span>
<span class="s2" style="left:42px;top:431px">09</span>
<span class="s2" style="left:72px;top:431px">09</span><span class="s8" style="left:84.67px;top:431px">/</span><span class="s2" style="left:90px;top:431px">05</span>
<span class="s2" style="left:123px;top:431px">09</span><span class="s8" style="left:135.67px;top:431px">/</span><span class="s2" style="left:141px;top:431px">16</span>
<span class="s2" style="left:204px;top:431px">10</span>
<span class="s2" style="left:233px;top:431px">10</span><span class="s8" style="left:245.67px;top:431px">/</span><span class="s2" style="left:251px;top:431px">14</span>
<span class="s2" style="left:285px;top:431px">10</span><span class="s8" style="left:297.67px;top:431px">/</span><span class="s2" style="left:303px;top:431px">23</span>
<span class="s9" style="left:336px;top:431px">11</span>
<span class="s9" style="left:366px;top:431px">11</span><span class="s8" style="left:378.67px;top:431px">/</span><span class="s2" style="left:384px;top:431px">07</span>
<span class="s9" style="left:417px;top:431px">11</span><span class="s8" style="left:429.67px;top:431px">/</span><span class="s2" style="left:435px;top:431px">18</span>
<span class="s9" style="left:464px;top:431px">11</span><span class="s8" style="left:476.67px;top:431px">/</span><span class="s2" style="left:482px;top:431px">26</span>

<div class="r" style="left:548px;top:217px;width:428px;height:230px;color:#6c819b"></div><div class="r" style="left:549px;top:218px;width:423px;height:228px;color:#fff"></div><div class="r" style="left:972px;top:218px;width:1px;height:228px;color:#7d90aa"></div><div class="r" style="left:973px;top:218px;width:3px;height:228px;color:#fff"></div><div class="r" style="left:974px;top:219px;width:2px;height:13px;color:#bcc8d9"></div><div class="r" style="left:974px;top:233px;width:2px;height:30px;color:#bcc8d9"></div><div class="r" style="left:974px;top:432px;width:2px;height:13px;color:#bcc8d9"></div><div class="r" style="left:549px;top:218px;width:423px;height:19px;color:#296cb0"></div><div class="r" style="left:634px;top:218px;width:1px;height:19px;color:#4681bd"></div><div class="r" style="left:719px;top:218px;width:1px;height:19px;color:#4681bd"></div><div class="r" style="left:804px;top:218px;width:1px;height:19px;color:#4681bd"></div><div class="r" style="left:888px;top:218px;width:1px;height:19px;color:#4681bd"></div><div class="r" style="left:549px;top:237px;width:85px;height:209px;color:#d5e0ed"></div><div class="r" style="left:634px;top:237px;width:1px;height:209px;color:#a7bbcf"></div><div class="r" style="left:719px;top:237px;width:1px;height:209px;color:#a7bbcf"></div><div class="r" style="left:804px;top:237px;width:1px;height:209px;color:#a7bbcf"></div><div class="r" style="left:888px;top:237px;width:1px;height:209px;color:#a7bbcf"></div><div class="r" style="left:549px;top:255px;width:423px;height:1px;color:#a7bbcf"></div><div class="r" style="left:549px;top:274px;width:423px;height:1px;color:#a7bbcf"></div><div class="r" style="left:549px;top:293px;width:423px;height:1px;color:#a7bbcf"></div><div class="r" style="left:549px;top:312px;width:423px;height:1px;color:#a7bbcf"></div><div class="r" style="left:549px;top:331px;width:423px;height:1px;color:#a7bbcf"></div><div class="r" style="left:549px;top:350px;width:423px;height:1px;color:#a7bbcf"></div><div class="r" style="left:549px;top:369px;width:423px;height:1px;color:#a7bbcf"></div><div class="r" style="left:549px;top:388px;width:423px;height:1px;color:#a7bbcf"></div><div class="r" style="left:549px;top:407px;width:423px;height:1px;color:#a7bbcf"></div><div class="r" style="left:549px;top:426px;width:423px;height:1px;color:#a7bbcf"></div><div class="r" style="left:549px;top:445px;width:423px;height:1px;color:#a7bbcf"></div><b class="w" style="left:566px;top:221px;letter-spacing:0.72px">국고</b><span class="w s0" style="left:590px;top:220px">5Y</span>
<span class="w s9" style="left:653px;top:220px">11</span><b class="w" style="left:665px;top:221px;letter-spacing:0.72px">시</b><span class="w s2" style="left:677px;top:220px">30</span><b class="w" style="left:689px;top:221px;letter-spacing:0.72px">분</b>
<span class="w s2" style="left:738px;top:220px">16</span><b class="w" style="left:750px;top:221px;letter-spacing:0.72px">시</b><span class="w s2" style="left:762px;top:220px">00</span><b class="w" style="left:774px;top:221px;letter-spacing:0.72px">분</b>
<b class="w" style="left:834.5px;top:221px;letter-spacing:0.72px">전기</b>
<b class="w" style="left:906.5px;top:221px;letter-spacing:0.72px">전기대비</b>
<svg style="position:absolute;left:628px;top:230px" width="5" height="4" viewBox="0 0 5 4" shape-rendering="crispEdges"><path d="M4 0h1v4h-4v-1h1v-1h1v-1h1z" fill="#fff"/></svg>
<span class="s2" style="left:567px;top:238px">25</span><span class="s8" style="left:579.67px;top:238px">/</span><span class="s9" style="left:585px;top:238px">11</span><span class="s8" style="left:597.67px;top:238px">/</span><span class="s2" style="left:603px;top:238px">25</span>
<span class="s2" style="left:684px;top:238px">3</span><span class="s10" style="left:690px;top:238px">,</span><span class="s11" style="left:694px;top:238px">086</span>
<span class="s2" style="left:769px;top:238px">3</span><span class="s10" style="left:775px;top:238px">,</span><span class="s11" style="left:779px;top:238px">099</span>
<span class="s2" style="left:853px;top:238px">3</span><span class="s10" style="left:859px;top:238px">,</span><span class="s11" style="left:863px;top:238px">107</span>
<span class="s4" style="left:934.1px;top:238px;color:#0000cc">-</span><span class="s2" style="left:940px;top:238px;color:#0000cc">0</span><span class="s10" style="left:946px;top:238px;color:#0000cc">,</span><span class="s11" style="left:950px;top:238px;color:#0000cc">008</span>

<span class="s2" style="left:567px;top:257px">25</span><span class="s8" style="left:579.67px;top:257px">/</span><span class="s9" style="left:585px;top:257px">11</span><span class="s8" style="left:597.67px;top:257px">/</span><span class="s2" style="left:603px;top:257px">24</span>
<span class="s2" style="left:684px;top:257px">3</span><span class="s10" style="left:690px;top:257px">,</span><span class="s11" style="left:694px;top:257px">067</span>
<span class="s2" style="left:769px;top:257px">3</span><span class="s10" style="left:775px;top:257px">,</span><span class="s11" style="left:779px;top:257px">107</span>
<span class="s2" style="left:853px;top:257px">3</span><span class="s10" style="left:859px;top:257px">,</span><span class="s11" style="left:863px;top:257px">076</span>
<span class="s2" style="left:940px;top:257px;color:#dc0000">0</span><span class="s10" style="left:946px;top:257px;color:#dc0000">,</span><span class="s11" style="left:950px;top:257px;color:#dc0000">031</span>

<span class="s2" style="left:567px;top:276px">25</span><span class="s8" style="left:579.67px;top:276px">/</span><span class="s9" style="left:585px;top:276px">11</span><span class="s8" style="left:597.67px;top:276px">/</span><span class="s2" style="left:603px;top:276px">21</span>
<span class="s2" style="left:684px;top:276px">3</span><span class="s10" style="left:690px;top:276px">,</span><span class="s11" style="left:694px;top:276px">086</span>
<span class="s2" style="left:769px;top:276px">3</span><span class="s10" style="left:775px;top:276px">,</span><span class="s11" style="left:779px;top:276px">076</span>
<span class="s2" style="left:853px;top:276px">3</span><span class="s10" style="left:859px;top:276px">,</span><span class="s12" style="left:863px;top:276px">115</span>
<span class="s4" style="left:934.1px;top:276px;color:#0000cc">-</span><span class="s2" style="left:940px;top:276px;color:#0000cc">0</span><span class="s10" style="left:946px;top:276px;color:#0000cc">,</span><span class="s11" style="left:950px;top:276px;color:#0000cc">039</span>

<span class="s2" style="left:567px;top:295px">25</span><span class="s8" style="left:579.67px;top:295px">/</span><span class="s9" style="left:585px;top:295px">11</span><span class="s8" style="left:597.67px;top:295px">/</span><span class="s2" style="left:603px;top:295px">20</span>
<span class="s2" style="left:684px;top:295px">3</span><span class="s10" style="left:690px;top:295px">,</span><span class="s11" style="left:694px;top:295px">079</span>
<span class="s2" style="left:769px;top:295px">3</span><span class="s10" style="left:775px;top:295px">,</span><span class="s12" style="left:779px;top:295px">115</span>
<span class="s2" style="left:853px;top:295px">3</span><span class="s10" style="left:859px;top:295px">,</span><span class="s11" style="left:863px;top:295px">072</span>
<span class="s2" style="left:940px;top:295px;color:#dc0000">0</span><span class="s10" style="left:946px;top:295px;color:#dc0000">,</span><span class="s11" style="left:950px;top:295px;color:#dc0000">043</span>

<span class="s2" style="left:567px;top:314px">25</span><span class="s8" style="left:579.67px;top:314px">/</span><span class="s9" style="left:585px;top:314px">11</span><span class="s8" style="left:597.67px;top:314px">/</span><span class="s2" style="left:603px;top:314px">19</span>
<span class="s2" style="left:684px;top:314px">3</span><span class="s10" style="left:690px;top:314px">,</span><span class="s11" style="left:694px;top:314px">079</span>
<span class="s2" style="left:769px;top:314px">3</span><span class="s10" style="left:775px;top:314px">,</span><span class="s11" style="left:779px;top:314px">072</span>
<span class="s2" style="left:853px;top:314px">3</span><span class="s10" style="left:859px;top:314px">,</span><span class="s11" style="left:863px;top:314px">068</span>
<span class="s2" style="left:940px;top:314px;color:#dc0000">0</span><span class="s10" style="left:946px;top:314px;color:#dc0000">,</span><span class="s11" style="left:950px;top:314px;color:#dc0000">004</span>

<span class="s2" style="left:567px;top:333px">25</span><span class="s8" style="left:579.67px;top:333px">/</span><span class="s9" style="left:585px;top:333px">11</span><span class="s8" style="left:597.67px;top:333px">/</span><span class="s2" style="left:603px;top:333px">18</span>
<span class="s2" style="left:684px;top:333px">3</span><span class="s10" style="left:690px;top:333px">,</span><span class="s11" style="left:694px;top:333px">090</span>
<span class="s2" style="left:769px;top:333px">3</span><span class="s10" style="left:775px;top:333px">,</span><span class="s11" style="left:779px;top:333px">068</span>
<span class="s2" style="left:853px;top:333px">3</span><span class="s10" style="left:859px;top:333px">,</span><span class="s11" style="left:863px;top:333px">105</span>
<span class="s4" style="left:934.1px;top:333px;color:#0000cc">-</span><span class="s2" style="left:940px;top:333px;color:#0000cc">0</span><span class="s10" style="left:946px;top:333px;color:#0000cc">,</span><span class="s11" style="left:950px;top:333px;color:#0000cc">037</span>

<span class="s2" style="left:567px;top:352px">25</span><span class="s8" style="left:579.67px;top:352px">/</span><span class="s9" style="left:585px;top:352px">11</span><span class="s8" style="left:597.67px;top:352px">/</span><span class="s2" style="left:603px;top:352px">17</span>
<span class="s2" style="left:684px;top:352px">3</span><span class="s10" style="left:690px;top:352px">,</span><span class="s11" style="left:694px;top:352px">124</span>
<span class="s2" style="left:769px;top:352px">3</span><span class="s10" style="left:775px;top:352px">,</span><span class="s11" style="left:779px;top:352px">105</span>
<span class="s2" style="left:853px;top:352px">3</span><span class="s10" style="left:859px;top:352px">,</span><span class="s11" style="left:863px;top:352px">126</span>
<span class="s4" style="left:934.1px;top:352px;color:#0000cc">-</span><span class="s2" style="left:940px;top:352px;color:#0000cc">0</span><span class="s10" style="left:946px;top:352px;color:#0000cc">,</span><span class="s11" style="left:950px;top:352px;color:#0000cc">021</span>

<span class="s2" style="left:567px;top:371px">25</span><span class="s8" style="left:579.67px;top:371px">/</span><span class="s9" style="left:585px;top:371px">11</span><span class="s8" style="left:597.67px;top:371px">/</span><span class="s2" style="left:603px;top:371px">14</span>
<span class="s2" style="left:684px;top:371px">3</span><span class="s10" style="left:690px;top:371px">,</span><span class="s11" style="left:694px;top:371px">155</span>
<span class="s2" style="left:769px;top:371px">3</span><span class="s10" style="left:775px;top:371px">,</span><span class="s11" style="left:779px;top:371px">126</span>
<span class="s2" style="left:853px;top:371px">3</span><span class="s10" style="left:859px;top:371px">,</span><span class="s11" style="left:863px;top:371px">084</span>
<span class="s2" style="left:940px;top:371px;color:#dc0000">0</span><span class="s10" style="left:946px;top:371px;color:#dc0000">,</span><span class="s11" style="left:950px;top:371px;color:#dc0000">042</span>

<span class="s2" style="left:567px;top:390px">25</span><span class="s8" style="left:579.67px;top:390px">/</span><span class="s9" style="left:585px;top:390px">11</span><span class="s8" style="left:597.67px;top:390px">/</span><span class="s2" style="left:603px;top:390px">13</span>
<span class="s2" style="left:684px;top:390px">3</span><span class="s10" style="left:690px;top:390px">,</span><span class="s11" style="left:694px;top:390px">067</span>
<span class="s2" style="left:769px;top:390px">3</span><span class="s10" style="left:775px;top:390px">,</span><span class="s11" style="left:779px;top:390px">084</span>
<span class="s2" style="left:853px;top:390px">3</span><span class="s10" style="left:859px;top:390px">,</span><span class="s11" style="left:863px;top:390px">088</span>
<span class="s4" style="left:934.1px;top:390px;color:#0000cc">-</span><span class="s2" style="left:940px;top:390px;color:#0000cc">0</span><span class="s10" style="left:946px;top:390px;color:#0000cc">,</span><span class="s11" style="left:950px;top:390px;color:#0000cc">004</span>

<span class="s2" style="left:567px;top:409px">25</span><span class="s8" style="left:579.67px;top:409px">/</span><span class="s9" style="left:585px;top:409px">11</span><span class="s8" style="left:597.67px;top:409px">/</span><span class="s2" style="left:603px;top:409px">12</span>
<span class="s2" style="left:684px;top:409px">3</span><span class="s10" style="left:690px;top:409px">,</span><span class="s11" style="left:694px;top:409px">015</span>
<span class="s2" style="left:769px;top:409px">3</span><span class="s10" style="left:775px;top:409px">,</span><span class="s11" style="left:779px;top:409px">088</span>
<span class="s2" style="left:853px;top:409px">2</span><span class="s10" style="left:859px;top:409px">,</span><span class="s11" style="left:863px;top:409px">991</span>
<span class="s2" style="left:940px;top:409px;color:#dc0000">0</span><span class="s10" style="left:946px;top:409px;color:#dc0000">,</span><span class="s11" style="left:950px;top:409px;color:#dc0000">097</span>

<span class="s2" style="left:567px;top:428px">25</span><span class="s8" style="left:579.67px;top:428px">/</span><span class="s9" style="left:585px;top:428px">11</span><span class="s8" style="left:597.67px;top:428px">/</span><span class="s9" style="left:603px;top:428px">11</span>
<span class="s2" style="left:684px;top:428px">3</span><span class="s10" style="left:690px;top:428px">,</span><span class="s11" style="left:694px;top:428px">005</span>
<span class="s2" style="left:769px;top:428px">2</span><span class="s10" style="left:775px;top:428px">,</span><span class="s11" style="left:779px;top:428px">991</span>
<span class="s2" style="left:853px;top:428px">3</span><span class="s10" style="left:859px;top:428px">,</span><span class="s11" style="left:863px;top:428px">035</span>
<span class="s4" style="left:934.1px;top:428px;color:#0000cc">-</span><span class="s2" style="left:940px;top:428px;color:#0000cc">0</span><span class="s10" style="left:946px;top:428px;color:#0000cc">,</span><span class="s11" style="left:950px;top:428px;color:#0000cc">044</span>

</div></body></html>
